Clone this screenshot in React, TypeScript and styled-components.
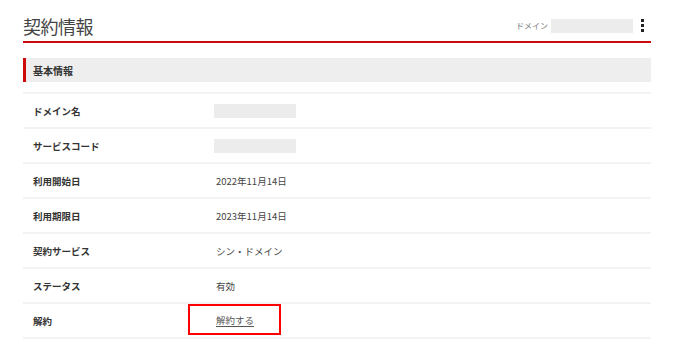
import React from 'react';
import styled, { createGlobalStyle } from 'styled-components';

const GlobalStyle = createGlobalStyle`
  body {
    margin: 0;
    background: #fff;
    font-family: "Noto Sans CJK JP", "Noto Sans", sans-serif;
    color: #333;
  }
`;

const Page = styled.div`
  width: 628px;
  padding: 0 27px 0 23px;
`;

const Header = styled.header`
  display: flex;
  align-items: center;
  height: 31px;
  padding-top: 10px;
  border-bottom: 2px solid #cc0a0a;
`;

const Title = styled.h1`
  flex: 1;
  margin: 0;
  font-size: 18px;
  font-weight: 400;
  color: #444;
  letter-spacing: -0.5px;
`;

const DomainLabel = styled.span`
  font-size: 8px;
  color: #777;
  margin-right: 3px;
`;

const Placeholder = styled.span<{ $width: number; $height: number }>`
  display: inline-block;
  width: ${p => p.$width}px;
  height: ${p => p.$height}px;
  background: #ececec;
`;

const Kebab = styled.button`
  display: flex;
  flex-direction: column;
  gap: 2px;
  margin: 0 7px 0 8px;
  padding: 0;
  border: 0;
  background: none;

  span {
    width: 3px;
    height: 3px;
    background: #222;
  }
`;

const SectionTitle = styled.h2`
  margin: 15px 0 10px;
  height: 24px;
  display: flex;
  align-items: center;
  padding-left: 7px;
  background: #eeeeee;
  border-left: 3px solid #cc0a0a;
  font-size: 10px;
  font-weight: 700;
  color: #333;
`;

const Table = styled.div`
  border-bottom: 2px solid #f3f3f3;
`;

const Row = styled.div`
  display: grid;
  grid-template-columns: 193px 1fr;
  align-items: center;
  height: 33px;
  border-top: 2px solid #f3f3f3;
`;

const Label = styled.div`
  padding-left: 10px;
  font-size: 9.5px;
  font-weight: 700;
  color: #333;
`;

const Value = styled.div`
  font-size: 9.5px;
  color: #444;
  display: flex;
  align-items: center;
  height: 100%;
`;

const Highlight = styled.div`
  display: flex;
  align-items: center;
  align-self: flex-start;
  box-sizing: border-box;
  height: 31px;
  width: 93px;
  margin-left: -28px;
  padding-left: 26px;
  border: 2px solid #ff0000;
`;

const CancelLink = styled.a`
  color: #555;
  text-decoration: underline;
  text-underline-offset: 2px;
  cursor: pointer;
`;

const rows: { label: string; value?: string }[] = [
  { label: 'ドメイン名' },
  { label: 'サービスコード' },
  { label: '利用開始日', value: '2022年11月14日' },
  { label: '利用期限日', value: '2023年11月14日' },
  { label: '契約サービス', value: 'シン・ドメイン' },
  { label: 'ステータス', value: '有効' },
];

export default function App() {
  return (
    <Page>
      <GlobalStyle />
      <Header>
        <Title>契約情報</Title>
        <DomainLabel>ドメイン</DomainLabel>
        <Placeholder $width={82} $height={14} />
        <Kebab aria-label="メニュー">
          <span />
          <span />
          <span />
        </Kebab>
      </Header>
      <SectionTitle>基本情報</SectionTitle>
      <Table>
        {rows.map(row => (
          <Row key={row.label}>
            <Label>{row.label}</Label>
            <Value>
              {row.value ?? <Placeholder $width={82} $height={14} style={{ marginLeft: -2 }} />}
            </Value>
          </Row>
        ))}
        <Row>
          <Label>解約</Label>
          <Value>
            <Highlight>
              <CancelLink>解約する</CancelLink>
            </Highlight>
          </Value>
        </Row>
      </Table>
    </Page>
  );
}
